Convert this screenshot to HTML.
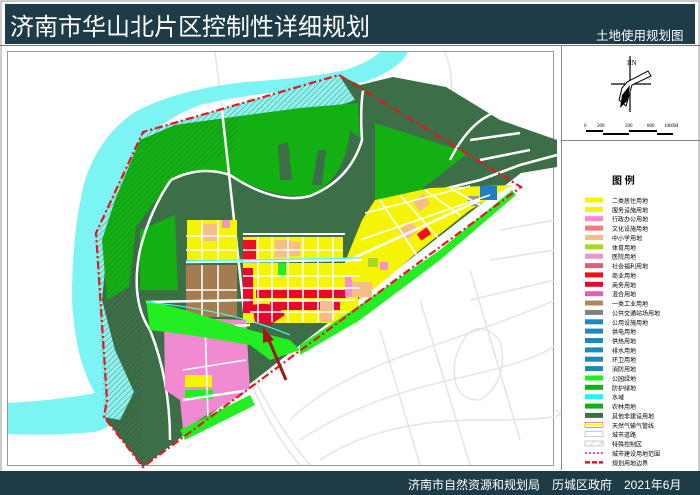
<!DOCTYPE html>
<html><head><meta charset="utf-8"><style>
html,body{margin:0;padding:0;background:#fff;width:700px;height:495px;overflow:hidden;font-family:"Liberation Sans","Noto Sans CJK SC",sans-serif}
svg{position:absolute;left:0;top:0}
.t{font-family:"Liberation Sans","Noto Sans CJK SC",sans-serif}
</style></head><body>
<svg width="700" height="495" viewBox="0 0 700 495" xmlns="http://www.w3.org/2000/svg">
<defs>
<pattern id="h" width="4" height="4" patternUnits="userSpaceOnUse" patternTransform="rotate(45)"><rect width="4" height="4" fill="none"/><line x1="0" y1="0" x2="0" y2="4" stroke="#1f4a2a" stroke-width="1"/></pattern>
<pattern id="hw" width="6" height="6" patternUnits="userSpaceOnUse" patternTransform="rotate(45)"><rect width="6" height="6" fill="#fff"/><line x1="0" y1="0" x2="0" y2="6" stroke="#bbb" stroke-width="1"/></pattern>
</defs>
<rect x="0" y="0" width="700" height="495" fill="#fff"/>
<rect x="1" y="1" width="698" height="493" fill="none" stroke="#999" stroke-width="1"/>
<rect x="5" y="4" width="690" height="40" fill="#1d3c48"/>
<text x="10" y="35" font-size="24" fill="#fff" class="t">济南市华山北片区控制性详细规划</text>
<text x="596" y="40" font-size="12.5" fill="#fff" class="t">土地使用规划图</text>
<line x1="0" y1="45.5" x2="700" y2="45.5" stroke="#777"/>
<line x1="561.5" y1="46" x2="561.5" y2="470" stroke="#888"/>
<rect x="7.5" y="51.5" width="546" height="414" fill="none" stroke="#999"/>
<g stroke="#e4e4e4" stroke-width="1.5" fill="none">
<path d="M290 420 Q330 380 420 350 T555 300"/>
<path d="M300 440 Q360 400 450 380 T555 345"/>
<path d="M320 460 Q380 420 480 420 T555 410"/>
<path d="M420 300 L470 465"/><path d="M470 270 L520 440"/><path d="M380 330 L420 465"/>
<path d="M500 230 L555 220"/><path d="M490 260 L555 250"/><path d="M470 300 L555 280"/>
<path d="M455 360 Q470 310 500 340 Q510 380 480 400 Q450 400 455 360"/>
<path d="M250 380 Q270 430 300 465"/><path d="M255 380 Q280 430 310 465"/>
<path d="M215 52 L230 170"/><path d="M445 52 Q460 90 440 140"/>
</g>
<path d="M380 52 L408 52 Q400 68 370 80 Q340 90 300 90 Q240 95 200 105 Q160 120 135 150 Q115 185 105 240 Q100 300 115 345 Q125 380 135 395 Q120 425 95 432 Q50 436 8 434 L8 403 Q60 400 95 393 Q75 360 72 300 Q72 230 85 180 Q100 135 135 112 Q175 90 245 82 Q310 78 345 70 Q370 62 380 52 Z" fill="#7cf4f4"/>
<path d="M143 132 L339 75 L360 85 L393 77 L446 87 L500 120 L557 140 L557 167 L521 173 L143 467 L104 417 L107 400 L96 233 Z" fill="#3c6e47"/>
<path d="M104 417 L96 233 L143 132 L143 467 Z" fill="url(#h)" opacity="0.5"/>
<path d="M339 75 L355 100 Q330 110 300 112 Q250 118 225 125 L143 140 L110 220 L102 300 L115 350 L134 392 L120 420 L104 417 L107 400 L96 233 L143 132 Z" fill="#8ef3ef"/>
<path d="M339 75 L355 100 Q330 110 300 112 Q250 118 225 125 L143 140 L110 220 L102 300 L115 350 L134 392 L120 420 L104 417 L107 400 L96 233 L143 132 Z" fill="url(#h)" opacity="0.6"/>
<path d="M102 240 L115 200 L140 140 L175 125 L225 118 L300 108 L358 103 L360 140 L345 182 L311 220 L270 205 L232 193 L171 180 L136 227 L129 287 L107 300 Z" fill="#12b012"/>
<path d="M102 240 L115 200 L140 140 L175 125 L225 118 L240 116 L235 150 L171 180 L136 227 L129 287 L107 300 Z" fill="url(#h)" opacity="0.45"/>
<path d="M240 130 L355 105 L358 140 L340 178 L310 190 L280 180 L250 170 L240 150 Z" fill="#12b012"/>
<path d="M278 145 L288 142 L292 180 L280 180 Z" fill="#3c6e47"/>
<path d="M318 150 L326 150 L322 185 L312 185 Z" fill="#3c6e47"/>
<path d="M140 230 L175 215 L178 290 L140 290 Z" fill="#12b012"/>
<path d="M375 123 L468 153 L421 190 L375 200 Z" fill="#12b012"/>
<path d="M171 180 Q200 165 230 175 Q275 200 310 195 Q345 180 350 130 L362 140 Q355 200 310 222 Q270 225 232 200 Q200 185 171 195 Z" fill="#3c6e47"/>
<g stroke="#fff" stroke-width="2.5" fill="none">
<path d="M222 110 L245 320 L248 390"/>
<path d="M171 180 Q200 165 230 175 Q275 205 310 196 Q350 180 362 140 Q360 110 363 90"/>
<path d="M171 180 Q150 210 140 250 Q130 300 150 330 Q170 380 170 440"/>
<path d="M450 160 Q470 120 500 110"/>
<path d="M470 140 L520 133"/>
<path d="M480 160 L530 150"/>
<path d="M440 190 L480 180 L520 165 L557 155"/>
</g>
<rect x="187" y="220" width="50" height="40" fill="#f5f500"/>
<rect x="203" y="224" width="14" height="17" fill="#f7bd86"/>
<rect x="222" y="220" width="8" height="8" fill="#f391c8"/>
<rect x="243" y="237" width="100" height="24" fill="#f5f500"/>
<rect x="243" y="240" width="13" height="20" fill="#ee1020"/>
<rect x="275" y="240" width="15" height="17" fill="#f7bd86"/>
<rect x="290" y="242" width="10" height="14" fill="#f7bd86"/>
<rect x="186" y="265" width="51" height="52" fill="#a57c4f"/>
<rect x="243" y="263" width="115" height="60" fill="#f5f500"/>
<rect x="243" y="268" width="10" height="45" fill="#e8082f"/>
<rect x="256" y="290" width="90" height="8" fill="#e8082f"/>
<rect x="270" y="302" width="70" height="8" fill="#e8082f"/>
<rect x="278" y="263" width="8" height="12" fill="#22ee22"/>
<rect x="345" y="275" width="18" height="22" fill="#f391c8"/>
<path d="M252 305 Q275 300 285 315 L270 325 L255 322 Z" fill="#e8082f"/>
<rect x="320" y="300" width="12" height="22" fill="#f7bd86"/>
<path d="M164 317 L246 320 L250 390 L215 410 L183 430 L180 400 L165 390 Z" fill="#f28ad2"/>
<rect x="185" y="375" width="27" height="12" fill="#f5f500"/>
<rect x="185" y="390" width="28" height="9" fill="#22ee22"/>
<path d="M362 220 L375 200 L430 188 L512 185 L470 210 L420 250 L385 280 L360 300 L345 262 Z" fill="#f5f500"/>
<rect x="415" y="197" width="13" height="12" fill="#f7bd86" transform="rotate(-35 421 203)"/>
<rect x="400" y="225" width="16" height="12" fill="#f7bd86" transform="rotate(-35 408 231)"/>
<rect x="352" y="282" width="20" height="15" fill="#f7bd86"/>
<rect x="418" y="230" width="12" height="8" fill="#ee1020" transform="rotate(-35 424 234)"/>
<rect x="480" y="186" width="17" height="14" fill="#1e7fc0"/>
<rect x="468" y="196" width="11" height="10" fill="#999"/>
<rect x="368" y="258" width="10" height="9" fill="#a8d820"/>
<rect x="380" y="262" width="8" height="8" fill="#f391c8"/>
<g stroke="#fff" stroke-width="1.6" fill="none">
<line x1="186" y1="236" x2="236" y2="236"/><line x1="186" y1="250" x2="236" y2="250"/>
<line x1="202" y1="220" x2="202" y2="260"/><line x1="218" y1="220" x2="218" y2="260"/>
<line x1="202" y1="265" x2="202" y2="317"/><line x1="218" y1="265" x2="218" y2="317"/>
<line x1="186" y1="290" x2="237" y2="290"/>
<line x1="243" y1="250" x2="343" y2="250"/>
<line x1="258" y1="237" x2="258" y2="322"/><line x1="272" y1="237" x2="272" y2="322"/><line x1="288" y1="237" x2="288" y2="322"/><line x1="303" y1="237" x2="303" y2="322"/><line x1="318" y1="237" x2="318" y2="322"/><line x1="333" y1="237" x2="333" y2="320"/>
<line x1="243" y1="276" x2="360" y2="276"/><line x1="243" y1="288" x2="360" y2="288"/><line x1="243" y1="300" x2="355" y2="300"/><line x1="250" y1="312" x2="350" y2="312"/>
<line x1="365" y1="213" x2="470" y2="186"/><line x1="360" y1="240" x2="490" y2="195"/>
<line x1="380" y1="200" x2="420" y2="260"/><line x1="400" y1="195" x2="440" y2="240"/><line x1="425" y1="190" x2="460" y2="215"/><line x1="450" y1="188" x2="480" y2="205"/>
<line x1="186" y1="262" x2="362" y2="260" stroke-width="2.5"/>
<line x1="243" y1="234" x2="345" y2="234" stroke-width="2"/>
<line x1="146" y1="302" x2="250" y2="300" stroke-width="2.5"/>
<line x1="170" y1="330" x2="250" y2="325" stroke-width="2.5"/>
<line x1="345" y1="262" x2="480" y2="200" stroke-width="2.5"/>
<line x1="183" y1="400" x2="250" y2="390" stroke-width="2.5"/>
<line x1="205" y1="320" x2="208" y2="420"/><line x1="183" y1="370" x2="246" y2="360"/>
</g>
<path d="M146 300 L185 310 L250 330 L290 340 L300 350 L270 360 L250 345 L190 335 L150 330 Z" fill="#22ee22"/>
<path d="M300 345 L360 305 L440 250 L512 190 L516 195 L440 260 L360 320 L300 355 Z" fill="#22ee22"/>
<path d="M180 430 L250 395 L255 405 L185 440 Z" fill="#22ee22"/>
<line x1="186" y1="261" x2="360" y2="258" stroke="#5ff" stroke-width="1.5"/>
<path d="M146 302 Q230 310 290 335" stroke="#5ff" stroke-width="1" fill="none"/>
<path d="M339 75 L521 187 L143 467 L104 417 L107 400 L96 233 L143 132 Z" fill="none" stroke="#e8141e" stroke-width="2.2" stroke-dasharray="8 3 2 3"/>
<line x1="286" y1="380" x2="268" y2="338" stroke="#a01818" stroke-width="3"/>
<path d="M263 327 L274 340 L263 343 Z" fill="#a01818"/>
<g stroke="#000" stroke-width="1.2" fill="none">
<line x1="630" y1="56" x2="630" y2="112"/>
<line x1="611" y1="84" x2="651" y2="84"/>
</g>
<path d="M627 82 L648 71 L651 76 L632 85 L626 106 L619 100 L622 88 Z" fill="#fff" stroke="#000" stroke-width="1"/>
<path d="M622 95 L630 85 L628 100 L620 108 Z" fill="#000"/>
<text x="627" y="65" font-size="7" font-family="Liberation Serif,serif">IIN</text>
<g font-size="5" font-family="Liberation Serif,serif"><text x="584" y="127">0</text><text x="597" y="127">200</text><text x="625" y="127">500</text><text x="647" y="127">800</text><text x="664" y="127">1000M</text></g>
<rect x="586" y="130" width="17" height="2" fill="#000"/><rect x="603" y="133" width="26" height="2" fill="#000"/><rect x="629" y="130" width="28" height="2" fill="#000"/><rect x="657" y="133" width="16" height="2" fill="#000"/>
<line x1="562" y1="140.5" x2="700" y2="140.5" stroke="#888"/>
<text x="612" y="184" font-size="10" font-weight="bold" class="t">图 例</text>
<g font-size="6" class="t" fill="#000">
<rect x="585" y="197.5" width="18" height="5" fill="#f5f500"/><text x="612" y="203">二类居住用地</text>
<rect x="585" y="206.9" width="18" height="5" fill="#f5f500"/><text x="612" y="212.4">服务设施用地</text>
<rect x="585" y="216.2" width="18" height="5" fill="#f28ad2"/><text x="612" y="221.7">行政办公用地</text>
<rect x="585" y="225.6" width="18" height="5" fill="#f57a7a"/><text x="612" y="231.1">文化设施用地</text>
<rect x="585" y="235" width="18" height="5" fill="#f7bd86"/><text x="612" y="240.5">中小学用地</text>
<rect x="585" y="244.3" width="18" height="5" fill="#a8d820"/><text x="612" y="249.8">体育用地</text>
<rect x="585" y="253.7" width="18" height="5" fill="#f391c8"/><text x="612" y="259.2">医院用地</text>
<rect x="585" y="263.1" width="18" height="5" fill="#d8607a"/><text x="612" y="268.6">社会福利用地</text>
<rect x="585" y="272.4" width="18" height="5" fill="#ee1010"/><text x="612" y="277.9">商业用地</text>
<rect x="585" y="281.8" width="18" height="5" fill="#e8082f"/><text x="612" y="287.3">商务用地</text>
<rect x="585" y="291.2" width="18" height="5" fill="#e060c0"/><text x="612" y="296.7">混合用地</text>
<rect x="585" y="300.5" width="18" height="5" fill="#b08860"/><text x="612" y="306">一类工业用地</text>
<rect x="585" y="309.9" width="18" height="5" fill="#808080"/><text x="612" y="315.4">公共交通站场用地</text>
<rect x="585" y="319.3" width="18" height="5" fill="#1e88c0"/><text x="612" y="324.8">公用设施用地</text>
<rect x="585" y="328.6" width="18" height="5" fill="#1e88c0"/><text x="612" y="334.1">供电用地</text>
<rect x="585" y="338" width="18" height="5" fill="#1e88c0"/><text x="612" y="343.5">供热用地</text>
<rect x="585" y="347.4" width="18" height="5" fill="#1e88c0"/><text x="612" y="352.9">排水用地</text>
<rect x="585" y="356.7" width="18" height="5" fill="#1e88c0"/><text x="612" y="362.2">环卫用地</text>
<rect x="585" y="366.1" width="18" height="5" fill="#1e88c0"/><text x="612" y="371.6">消防用地</text>
<rect x="585" y="375.5" width="18" height="5" fill="#22ee22"/><text x="612" y="381">公园绿地</text>
<rect x="585" y="384.8" width="18" height="5" fill="#12b012"/><text x="612" y="390.3">防护绿地</text>
<rect x="585" y="394.2" width="18" height="5" fill="#22f4f4"/><text x="612" y="399.7">水域</text>
<rect x="585" y="403.6" width="18" height="5" fill="#12b012"/><text x="612" y="409.1">农林用地</text>
<rect x="585" y="412.9" width="18" height="5" fill="#3c6e47"/><text x="612" y="418.4">其他非建设用地</text>
<rect x="585" y="422.3" width="18" height="5" fill="#fff" stroke="#e44" stroke-width="0.6"/><line x1="585" y1="424.8" x2="603" y2="424.8" stroke="#ff0" stroke-width="1.5"/><text x="612" y="427.8">天然气输气管线</text>
<rect x="585" y="431.7" width="18" height="5" fill="#fff" stroke="#aaa" stroke-width="0.6"/><text x="612" y="437.2">城市道路</text>
<rect x="585" y="441" width="18" height="5" fill="url(#hw)" stroke="#aaa" stroke-width="0.6"/><text x="612" y="446.5">特殊控制区</text>
<line x1="585" y1="453" x2="603" y2="453" stroke="#f0f" stroke-width="1.5" stroke-dasharray="2 2"/><text x="612" y="455.9">城市建设用地范围</text>
<line x1="585" y1="462.4" x2="603" y2="462.4" stroke="#e8141e" stroke-width="2.5" stroke-dasharray="5 2"/><text x="612" y="465.3">规划用地边界</text>
</g>
<rect x="0" y="471" width="700" height="24" fill="#1d3c48"/>
<text x="408" y="489" font-size="12" fill="#fff" class="t">济南市自然资源和规划局　历城区政府　2021年6月</text>
</svg>
</body></html>
